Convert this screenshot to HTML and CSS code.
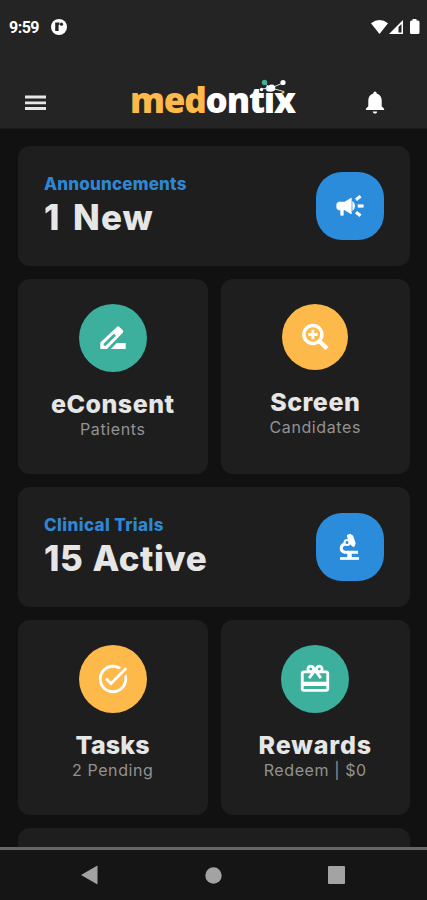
FILE: index.html
```html
<!DOCTYPE html>
<html lang="en">
<head>
    <meta charset="UTF-8">
    <meta name="viewport" content="width=device-width, initial-scale=1.0">
    <title>Medontix</title>
    <link rel="stylesheet" href="styles.css">
</head>
<body>

    <!-- Header -->
    <header class="header">
        <div class="status-bar">
            <span class="time">9:59</span>
            <svg class="status-app" width="16" height="16" viewBox="0 0 16 16">
                <circle cx="8" cy="8" r="8" fill="#fff"/>
                <path d="M4.200 3.500h4.300v2.300H7.600v6.200H4.200z" fill="#242424"/>
                <circle cx="10.500" cy="5.200" r="1.600" fill="#242424"/>
            </svg>
            <svg class="status-icons" width="50" height="16" viewBox="0 0 50 16">
                <path d="M1 4.200Q9.500-2.400 18 4.200L9.500 15z" fill="#fff"/>
                <path d="M19 15L33 1v14z" fill="#fff"/>
                <path d="M28.500 8L31.500 5v8.500h-3z" fill="#242424"/>
                <path d="M42.500 0h4v1.500H48q1.500 0 1.500 1.500v10.500q0 1.500-1.500 1.500h-6.500q-1.500 0-1.500-1.500V3q0-1.500 1.500-1.500h1z" fill="#fff"/>
            </svg>
        </div>
        <div class="top-bar">
            <svg width="22" height="16" viewBox="0 0 22 16">
                <path d="M0 2h21M0 7.800h21M0 13.500h21" stroke="#e6e6e6" stroke-width="2.800"/>
            </svg>
            <div class="logo">
                <span class="logo-med">med</span>ontix
                <svg class="logo-dots" width="30" height="18" viewBox="0 0 30 18">
                    <path d="M5 4l7 5 12-5M2 10l10-1 11 3" fill="none" stroke="#ddd" stroke-width="1"/>
                    <circle cx="5.500" cy="3.500" r="2.700" fill="#3eb295"/>
                    <circle cx="24" cy="3.500" r="2.600" fill="#fff"/>
                    <circle cx="12.700" cy="9" r="3.600" fill="#fff"/>
                    <circle cx="2.500" cy="10.500" r="1.700" fill="#fff"/>
                    <circle cx="24" cy="13" r="1.500" fill="#fdb94a"/>
                </svg>
            </div>
            <svg width="20" height="23" viewBox="0 0 20 24">
                <path d="M10 23.500c1.300 0 2.300-1 2.300-2.200H7.700c0 1.200 1 2.200 2.300 2.200zM17 16V10c0-3.700-1.900-6.600-5.300-7.400V2.200a1.700 1.700 0 0 0-3.400 0v.4C4.900 3.400 3 6.300 3 10v6l-2.500 2.500v1.200h19v-1.200z" fill="#fff"/>
            </svg>
        </div>
    </header>

    <!-- Dashboard cards -->
    <main class="cards">
        <div class="card card-wide">
            <div>
                <h3 class="label">Announcements</h3>
                <p class="value value-new">1 New</p>
            </div>
            <div class="icon icon-blue">
                <svg width="32" height="32" viewBox="0 0 24 24" fill="#fff" stroke="#fff" stroke-width=".4">
                    <path d="M18 11v2h4v-2h-4zm-2 6.610c.96.710 2.210 1.650 3.200 2.390.4-.53.800-1.070 1.200-1.600-.99-.74-2.240-1.680-3.200-2.400-.4.540-.8 1.080-1.200 1.610zM20.400 5.600c-.4-.53-.8-1.070-1.200-1.600-.99.740-2.240 1.680-3.200 2.400.4.530.8 1.070 1.200 1.600.96-.72 2.210-1.650 3.200-2.400zM4 9c-1.100 0-2 .9-2 2v2c0 1.100.9 2 2 2h1v4h2v-4h1l5 3V6L8 9H4zm11.500 3c0-1.330-.58-2.530-1.500-3.350v6.690c.92-.81 1.500-2.010 1.500-3.340z"/>
                </svg>
            </div>
        </div>

        <div class="card">
            <div class="icon icon-green">
                <svg width="32" height="32" viewBox="0 0 24 24" fill="#fff">
                    <path d="M21.500 15.700v4.500H10.300l4.500-4.500z"/>
                    <path fill-rule="evenodd" d="M14.900 3.700q1-.9 1.900 0l2.500 2.500q.9.900 0 1.900L7.500 20.200H2.500v-4.800zM5 16.300v1.500h1.500L14.200 10.400l-1.500-1.500z"/>
                </svg>
            </div>
            <h2 class="title">eConsent</h2>
            <p class="sub">Patients</p>
        </div>

        <div class="card">
            <div class="icon icon-orange icon-small">
                <svg width="30" height="30" viewBox="0 0 24 24" fill="none" stroke="#fff">
                    <circle cx="10.300" cy="10" r="7.200" stroke-width="2.800"/>
                    <path d="M15.300 15l6.300 6.300" stroke-width="3.500"/>
                    <path d="M10.300 6.200v7.600M6.500 10h7.600" stroke-width="2.300"/>
                </svg>
            </div>
            <h2 class="title">Screen</h2>
            <p class="sub">Candidates</p>
        </div>

        <div class="card card-wide">
            <div>
                <h3 class="label label-trials">Clinical Trials</h3>
                <p class="value value-active">15 Active</p>
            </div>
            <div class="icon icon-blue">
                <svg width="24" height="28" viewBox="0 0 24 28" fill="none" stroke="#fff">
                    <path d="M9.300 1.800l2.500-.9q.8-.2 1.200.5 1.500.1 2.300 1.900l2.300 6.700q.3 1.300-.8 2l.3 1.300-2.300.8-.8-1.300q-1.200 0-1.600-1.200L9 3.800q-.3-1.300.3-2z" fill="#fff" stroke="none"/>
                    <circle cx="9" cy="9.500" r="2.500" fill="#2b8cdb" stroke-width="2"/>
                    <path d="M6.500 11C2.300 12.800 2 18 6.500 19.200H20" stroke-width="3"/>
                    <path d="M2 25.500h19" stroke-width="2.700"/>
                    <path d="M11.500 19v6" stroke-width="4.500"/>
                </svg>
            </div>
        </div>

        <div class="card">
            <div class="icon icon-orange">
                <svg width="34" height="34" viewBox="0 0 24 24" fill="#fff">
                    <path d="M22 5.180L10.590 16.600l-4.240-4.240 1.410-1.410 2.830 2.830 10-10L22 5.180zm-2.210 5.040c.13.570.21 1.170.21 1.780 0 4.420-3.580 8-8 8s-8-3.580-8-8 3.580-8 8-8c1.580 0 3.040.46 4.280 1.250l1.440-1.440C16.100 2.670 14.130 2 12 2 6.480 2 2 6.480 2 12s4.480 10 10 10 10-4.480 10-10c0-1.190-.22-2.330-.6-3.390l-1.610 1.610z"/>
                </svg>
            </div>
            <h2 class="title title-tasks">Tasks</h2>
            <p class="sub">2 Pending</p>
        </div>

        <div class="card">
            <div class="icon icon-green">
                <svg width="34" height="34" viewBox="0 0 24 24" fill="#fff">
                    <path d="M20 6h-2.180c.11-.31.180-.65.180-1 0-1.660-1.340-3-3-3-1.050 0-1.960.54-2.500 1.350l-.5.670-.5-.68C10.960 2.540 10.050 2 9 2 7.340 2 6 3.340 6 5c0 .35.070.69.180 1H4c-1.110 0-1.990.89-1.990 2L2 19c0 1.110.89 2 2 2h16c1.110 0 2-.89 2-2V8c0-1.110-.89-2-2-2zm-5-2c.55 0 1 .45 1 1s-.45 1-1 1-1-.45-1-1 .45-1 1-1zM9 4c.55 0 1 .45 1 1s-.45 1-1 1-1-.45-1-1 .45-1 1-1zm11 15H4v-2h16v2zm0-5H4V8h5.080L7 10.830 8.620 12 11 8.760l1-1.360 1 1.360L15.380 12 17 10.830 14.920 8H20v6z"/>
                </svg>
            </div>
            <h2 class="title title-rewards">Rewards</h2>
            <p class="sub">Redeem | $0</p>
        </div>

        <div class="card card-wide"></div>
    </main>

    <!-- Android navigation -->
    <nav class="nav">
        <svg width="17" height="20" viewBox="0 0 17 20"><path d="M0 10L16.500.500v19z" fill="#a3a3a3"/></svg>
        <svg width="17" height="17" viewBox="0 0 17 17"><circle cx="8.500" cy="8.500" r="8.200" fill="#a3a3a3"/></svg>
        <svg width="17" height="18" viewBox="0 0 17 18"><rect width="17" height="18" rx="1" fill="#a3a3a3"/></svg>
    </nav>

</body>
</html>
```
FILE: styles.css
```css
* {
    box-sizing: border-box;
}
body {
    margin: 0;
    height: 900px;
    display: flex;
    flex-direction: column;
    overflow: hidden;
    background: #111;
    color: #e6e6e6;
    font-family: Inter, "Liberation Sans", sans-serif;
}
h2, h3, p {
    margin: 0;
}
svg {
    display: block;
    flex-shrink: 0;
}

/* Header */
.header {
    height: 129px;
    flex-shrink: 0;
    background: #242424;
    border-bottom: 1px solid #1a1a1a;
}
.status-bar {
    display: flex;
    align-items: center;
    height: 54px;
    padding: 0 7px 0 9px;
    color: #fff;
}
.time {
    width: 42px;
    padding-top: 1px;
    font-family: Roboto, sans-serif;
    font-size: 16px;
    font-weight: 700;
    letter-spacing: -0.5px;
}
.status-icons {
    margin-left: auto;
}
.top-bar {
    display: flex;
    align-items: center;
    justify-content: space-between;
    height: 48px;
    margin-top: 24px;
    padding: 1px 42px 0 25px;
}
.logo {
    position: relative;
    margin: -5px 0 0 14px;
    width: 166px;
    white-space: nowrap;
    color: #fff;
    font-family: "Open Sans", sans-serif;
    font-size: 35px;
    font-weight: 800;
    line-height: 48px;
    letter-spacing: -1.2px;
}
.logo-med {
    color: #fdb94a;
}
.logo-dots {
    position: absolute;
    right: 7px;
    top: 3px;
}

/* Cards */
.cards {
    flex: 1;
    min-height: 0;
    overflow: hidden;
    display: grid;
    grid-template-columns: 1fr 1fr;
    grid-template-rows: 120px 195px 120px 195px 120px;
    gap: 13px;
    padding: 17px 17px 0 18px;
}
.card {
    display: flex;
    flex-direction: column;
    align-items: center;
    padding-top: 25px;
    border-radius: 12px;
    background: #1e1e1e;
}
.card-wide {
    grid-column: span 2;
    flex-direction: row;
    justify-content: space-between;
    padding: 0 26px 1px;
}
.icon {
    display: flex;
    align-items: center;
    justify-content: center;
    width: 68px;
    height: 68px;
    border-radius: 50%;
}
.icon-small {
    width: 66px;
    height: 66px;
}
.icon-blue {
    border-radius: 26px;
    background: #2b8cdb;
}
.icon-green {
    background: #3cb09c;
}
.icon-orange {
    background: #fdb94a;
}
.label {
    color: #2f87d3;
    font-size: 17px;
    font-weight: 800;
    line-height: 22px;
    letter-spacing: 0.2px;
}
.label-trials {
    letter-spacing: 0.4px;
}
.value {
    font-size: 35px;
    font-weight: 800;
    line-height: 44px;
}
.value-new {
    letter-spacing: 1px;
    word-spacing: 4px;
}
.value-active {
    letter-spacing: 0.5px;
    word-spacing: 1px;
}
.title {
    margin-top: 18px;
    font-size: 25px;
    font-weight: 800;
    line-height: 29px;
    letter-spacing: 0.5px;
}
.title-tasks {
    letter-spacing: 0.2px;
}
.title-rewards {
    letter-spacing: 0.9px;
}
.sub {
    color: #929292;
    font-size: 16px;
    line-height: 20px;
    letter-spacing: 0.6px;
}

/* Android navigation */
.nav {
    display: flex;
    align-items: center;
    justify-content: space-between;
    height: 53px;
    flex-shrink: 0;
    padding: 0 82px 0 81px;
    border-top: 3px solid #666;
    background: #151515;
}
```
